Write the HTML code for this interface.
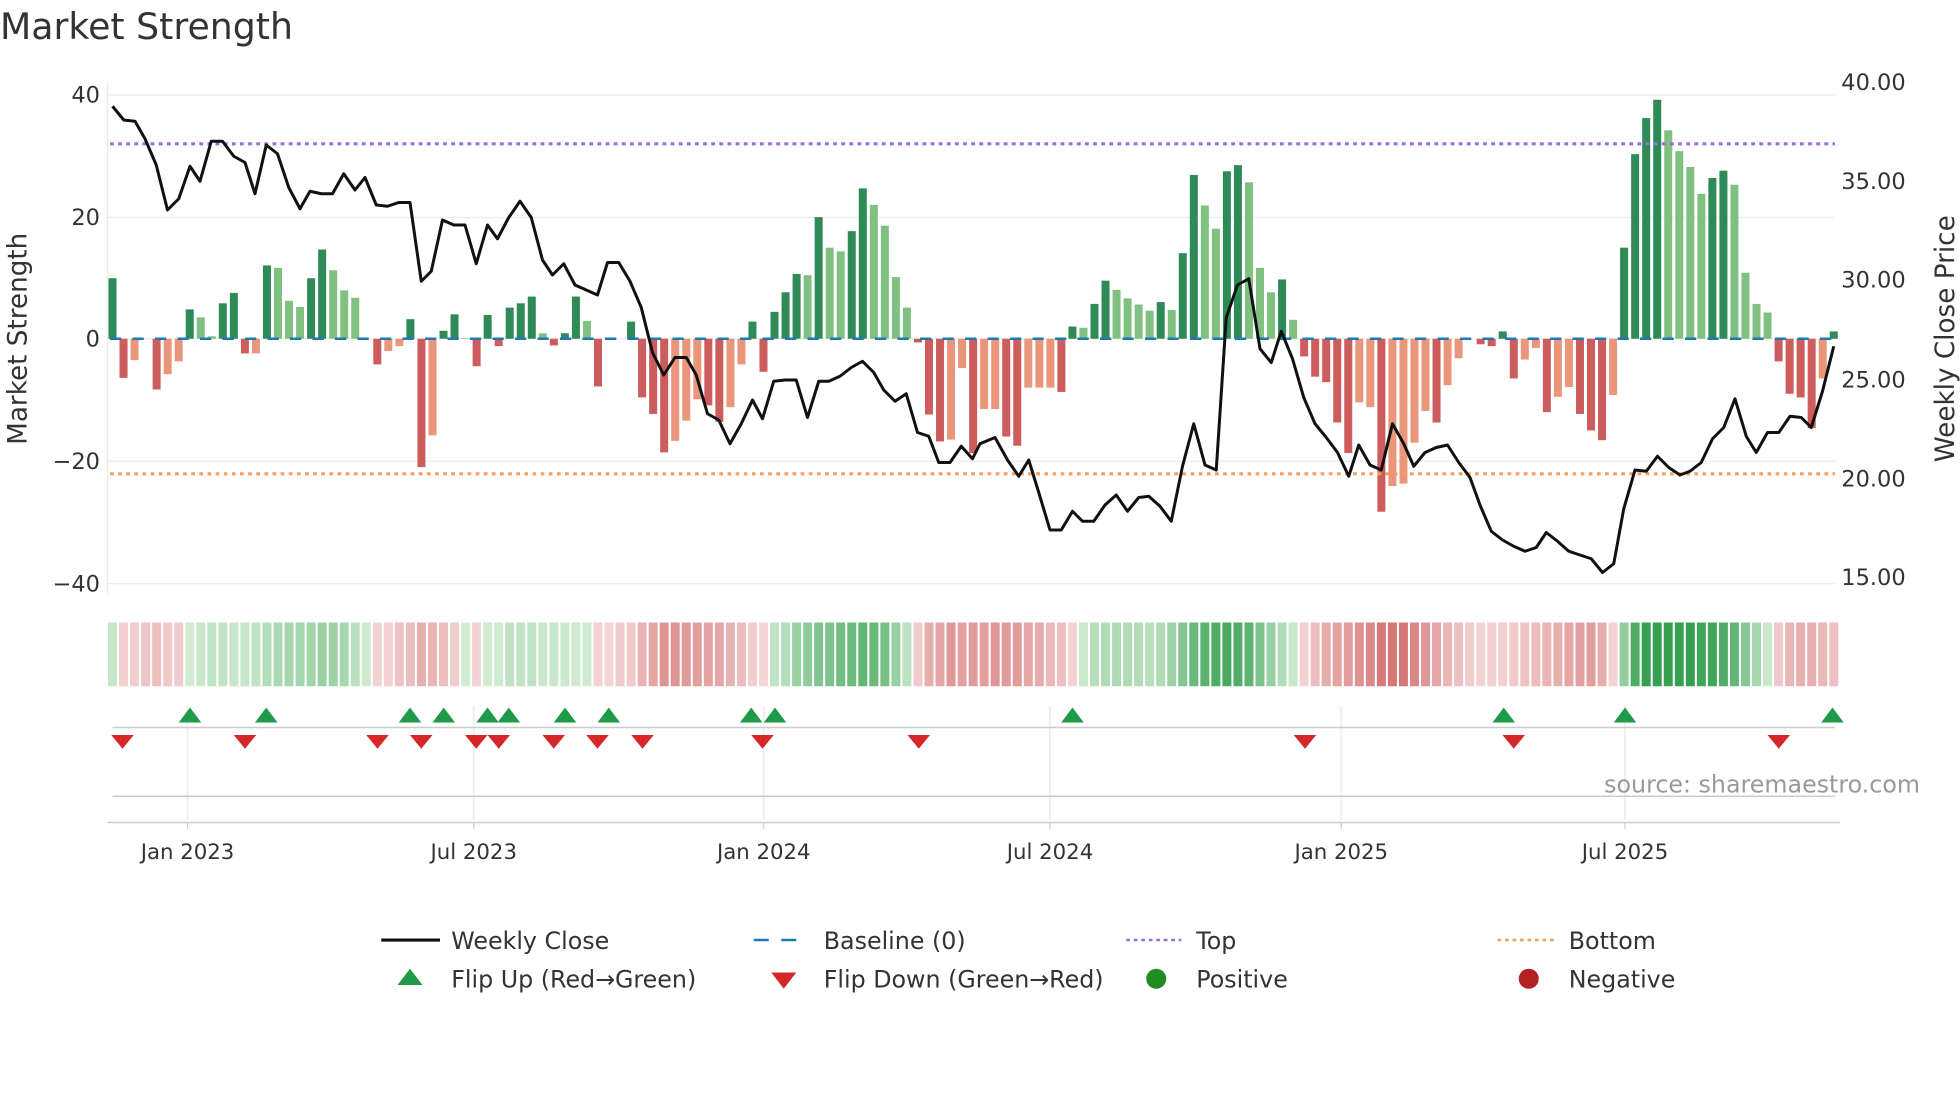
<!DOCTYPE html>
<html><head><meta charset="utf-8"><style>
html,body{margin:0;padding:0;background:#fff;}
svg{display:block;font-family:"DejaVu Sans","Liberation Sans",sans-serif;}
</style></head><body>
<svg id="s" width="1960" height="1102" viewBox="0 0 1568 881.6" xmlns="http://www.w3.org/2000/svg">
<rect width="1568" height="882" fill="#fff"/>
<text x="0" y="31" font-size="29" fill="#333">Market Strength</text>
<g stroke="#ececec" stroke-width="1">
<line x1="86" y1="76" x2="1468" y2="76"/><line x1="86" y1="174" x2="1468" y2="174"/>
<line x1="86" y1="271" x2="1468" y2="271"/><line x1="86" y1="369" x2="1468" y2="369"/>
<line x1="86" y1="467" x2="1468" y2="467"/>
<line x1="86" y1="65" x2="86" y2="476"/>
</g>
<g font-size="18" fill="#333" text-anchor="end">
<text x="80" y="82">40</text><text x="80" y="180">20</text><text x="80" y="277">0</text>
<text x="80" y="375">−20</text><text x="80" y="473">−40</text>
</g>
<g font-size="18" fill="#333">
<text x="1473" y="72">40.00</text><text x="1473" y="151">35.00</text><text x="1473" y="230">30.00</text>
<text x="1473" y="310">25.00</text><text x="1473" y="389">20.00</text><text x="1473" y="468">15.00</text>
</g>
<text transform="translate(21,271) rotate(-90)" text-anchor="middle" font-size="21" fill="#333">Market Strength</text>
<text transform="translate(1563,271) rotate(-90)" text-anchor="middle" font-size="21" fill="#333">Weekly Close Price</text>
<g id="bars"></g>
<line x1="88" y1="271" x2="1468" y2="271" stroke="#1f77b4" stroke-width="2" stroke-dasharray="9 9"/>
<line x1="88" y1="115" x2="1468" y2="115" stroke="#9b6be0" stroke-width="2.5" stroke-dasharray="3 3.5"/>
<line x1="88" y1="379" x2="1468" y2="379" stroke="#f2a05a" stroke-width="2.5" stroke-dasharray="3 3.5"/>
<polyline id="price" fill="none" stroke="#111" stroke-width="2.4" stroke-linejoin="round"/>
<g id="strip"></g>
<g stroke="#eee" stroke-width="1.5">
<line x1="150" y1="565" x2="150" y2="656"/><line x1="379" y1="565" x2="379" y2="656"/>
<line x1="611" y1="565" x2="611" y2="656"/><line x1="840" y1="565" x2="840" y2="656"/>
<line x1="1073" y1="565" x2="1073" y2="656"/><line x1="1300" y1="565" x2="1300" y2="656"/>
</g>
<line x1="90" y1="582" x2="1468" y2="582" stroke="#ccc" stroke-width="1.2"/>
<line x1="90" y1="637" x2="1468" y2="637" stroke="#ccc" stroke-width="1.2"/>
<line x1="86" y1="658" x2="1472" y2="658" stroke="#ccc" stroke-width="1.2"/>
<g stroke="#ccc"><line x1="150" y1="658" x2="150" y2="663"/><line x1="379" y1="658" x2="379" y2="663"/><line x1="611" y1="658" x2="611" y2="663"/><line x1="840" y1="658" x2="840" y2="663"/><line x1="1073" y1="658" x2="1073" y2="663"/><line x1="1300" y1="658" x2="1300" y2="663"/></g>
<g id="marks"></g>
<text x="1536" y="634" text-anchor="end" font-size="19" fill="#999">source: sharemaestro.com</text>
<g font-size="17" fill="#333" text-anchor="middle">
<text x="150" y="687">Jan 2023</text><text x="379" y="687">Jul 2023</text><text x="611" y="687">Jan 2024</text>
<text x="840" y="687">Jul 2024</text><text x="1073" y="687">Jan 2025</text><text x="1300" y="687">Jul 2025</text>
</g>
<g font-size="19" fill="#333">
<line x1="305" y1="752" x2="352" y2="752" stroke="#111" stroke-width="2.5"/>
<text x="361" y="759">Weekly Close</text>
<line x1="603" y1="752" x2="647" y2="752" stroke="#1f77b4" stroke-width="2" stroke-dasharray="12 10"/>
<text x="659" y="759">Baseline (0)</text>
<line x1="901" y1="752" x2="945" y2="752" stroke="#9b6be0" stroke-width="2" stroke-dasharray="3 3"/>
<text x="957" y="759">Top</text>
<line x1="1198" y1="752" x2="1243" y2="752" stroke="#f2a05a" stroke-width="2" stroke-dasharray="3 3"/>
<text x="1255" y="759">Bottom</text>
<polygon points="318,788 338,788 328,775" fill="#1f9a48"/>
<text x="361" y="790">Flip Up (Red→Green)</text>
<polygon points="617,778 637,778 627,791" fill="#d62728"/>
<text x="659" y="790">Flip Down (Green→Red)</text>
<circle cx="925" cy="783" r="8" fill="#228b22"/>
<text x="957" y="790">Positive</text>
<circle cx="1223" cy="783" r="8" fill="#b22222"/>
<text x="1255" y="790">Negative</text>
</g>
</svg>
<script>
var NS="http://www.w3.org/2000/svg";
var V=[[9.9,'D'],[-6.4,'R'],[-3.5,'S'],[0,'L'],[-8.3,'R'],[-5.8,'S'],[-3.7,'S'],[4.8,'D'],[3.5,'L'],[0.4,'L'],
[5.8,'D'],[7.5,'D'],[-2.4,'R'],[-2.4,'S'],[12,'D'],[11.6,'L'],[6.2,'L'],[5.2,'L'],[9.9,'D'],[14.6,'D'],
[11.2,'L'],[7.9,'L'],[6.7,'L'],[0,'L'],[-4.2,'R'],[-2,'S'],[-1.2,'S'],[3.2,'D'],[-21,'R'],[-15.8,'S'],
[1.3,'D'],[4,'D'],[0.1,'L'],[-4.5,'R'],[3.9,'D'],[-1.2,'R'],[5.1,'D'],[5.8,'D'],[6.9,'D'],[0.9,'L'],
[-1.1,'R'],[0.9,'D'],[6.9,'D'],[2.9,'L'],[-7.8,'R'],[0.1,'L'],[0,'L'],[2.8,'D'],[-9.6,'R'],[-12.3,'R'],
[-18.6,'R'],[-16.7,'S'],[-13.4,'S'],[-9.9,'S'],[-10.9,'R'],[-13.6,'R'],[-11.2,'S'],[-4.2,'S'],[2.8,'D'],[-5.4,'R'],
[4.4,'D'],[7.6,'D'],[10.6,'D'],[10.4,'L'],[19.9,'D'],[14.9,'L'],[14.3,'L'],[17.6,'D'],[24.6,'D'],[21.9,'L'],
[18.5,'L'],[10.1,'L'],[5.1,'L'],[-0.6,'R'],[-12.4,'R'],[-16.8,'R'],[-16.5,'S'],[-4.8,'S'],[-18.7,'R'],
[-11.5,'S'],[-11.5,'S'],[-16,'R'],[-17.5,'R'],[-8,'S'],[-8,'S'],[-8,'S'],[-8.7,'R'],[2,'D'],[1.8,'L'],[5.7,'D'],
[9.5,'D'],[8,'L'],[6.6,'L'],[5.6,'L'],[4.6,'L'],[6,'D'],[4.7,'L'],[14,'D'],[26.8,'D'],[21.8,'L'],[18,'L'],
[27.4,'D'],[28.4,'D'],[25.6,'L'],[11.6,'L'],[7.6,'L'],[9.7,'D'],[3.1,'L'],[-2.9,'R'],[-6.2,'R'],[-7.1,'R'],
[-13.7,'R'],[-18.7,'R'],[-10.4,'S'],[-11.2,'S'],[-28.3,'R'],[-24.1,'S'],[-23.7,'S'],[-17,'S'],[-11.8,'S'],[-13.7,'R'],
[-7.6,'S'],[-3.2,'S'],[0,'L'],[-0.9,'R'],[-1.2,'R'],[1.2,'D'],[-6.5,'R'],[-3.4,'S'],[-1.5,'S'],[-12,'R'],
[-9.5,'S'],[-7.9,'S'],[-12.3,'R'],[-15,'R'],[-16.6,'R'],[-9.2,'S'],[14.9,'D'],[30.2,'D'],[36.1,'D'],[39.1,'D'],
[34.1,'L'],[30.7,'L'],[28.1,'L'],[23.7,'L'],[26.3,'D'],[27.5,'D'],[25.2,'L'],[10.8,'L'],[5.7,'L'],[4.3,'L'],
[-3.7,'R'],[-9,'R'],[-9.6,'R'],[-14.6,'R'],[-6.5,'S'],[1.2,'D']];
var C={D:'#2e8b57',L:'#80c080',R:'#cd5c5c',S:'#e9967a'};
var bars=document.getElementById('bars'),strip=document.getElementById('strip');
var step=(1467-90)/(V.length-1);
function rect(g,x,y,w,h,f){var r=document.createElementNS(NS,'rect');r.setAttribute('x',x);r.setAttribute('y',y);r.setAttribute('width',w);r.setAttribute('height',h);r.setAttribute('fill',f);g.appendChild(r);}
function mix(a,b,t){return 'rgb('+[0,1,2].map(function(i){return Math.round(a[i]+(b[i]-a[i])*t)}).join(',')+')';}
for(var i=0;i<V.length;i++){
 var v=V[i][0],x=90+i*step,h=Math.abs(v)*4.89;
 if(h>0.2) rect(bars,x-3.2,v>0?271-h:271,6.4,h,C[V[i][1]]);
 var s=0,n=0;for(var k=-2;k<=2;k++){if(V[i+k]){s+=V[i+k][0]*(k==0?2:1);n+=(k==0?2:1);}}
 var m=s/n,t=Math.min(1,Math.abs(m)/28),col;
 if(m>=0) col=mix([214,238,214],[54,160,80],t); else col=mix([244,214,214],[205,90,90],t);
 rect(strip,x-3.6,498,7.2,51,col);
}
var P=[[90,85],[99,96],[108,97],[116,111],[125,132],[134,168],[143,159],[152,133],[160,145],[169,113],[178,113],[187,125],[196,130],[204,155],[213,116],[222,123],[231,150],[240,167],[248,153],[257,155],[266,155],[275,139],[284,152],[292,142],[301,164],[310,165],[319,162],[328,162],[337,225],[345,217],[354,176],[363,180],[372,180],[381,211],[390,180],[398,191],[407,174],[416,161],[425,174],[434,208],[442,220],[451,211],[460,228],[469,232],[478,236],[486,210],[495,210],[504,225],[513,246],[522,282],[531,300],[540,286],[549,286],[557,300],[566,331],[575,336],[584,355],[593,339],[602,320],[610,335],[619,305],[628,304],[637,304],[646,334],[655,305],[663,305],[672,301],[681,294],[690,289],[699,298],[707,312],[716,321],[725,315],[734,346],[743,349],[751,370],[760,370],[769,357],[778,367],[784,355],[796,350],[806,368],[815,381],[823,368],[831,394],[840,424],[849,424],[858,409],[866,417],[875,417],[884,404],[893,396],[902,409],[911,398],[919,397],[928,405],[937,417],[946,373],[955,339],[964,372],[973,376],[981,254],[990,228],[999,223],[1008,279],[1017,290],[1025,265],[1034,287],[1043,318],[1052,339],[1061,350],[1070,362],[1079,381],[1087,356],[1096,372],[1105,376],[1114,339],[1123,355],[1131,373],[1140,362],[1149,358],[1158,356],[1167,370],[1176,382],[1184,404],[1193,425],[1202,432],[1211,437],[1220,441],[1229,438],[1237,426],[1246,433],[1255,441],[1264,444],[1273,447],[1282,458],[1291,451],[1299,407],[1308,376],[1317,377],[1326,365],[1335,374],[1344,380],[1352,377],[1361,370],[1370,351],[1379,342],[1388,319],[1397,349],[1405,362],[1414,346],[1423,346],[1432,333],[1441,334],[1449,342],[1458,313],[1467,277]];
document.getElementById('price').setAttribute('points',P.map(function(p){return p.join(',')}).join(' '));
var marks=document.getElementById('marks');
[152,213,328,355,390,407,452,487,601,620,858,1203,1300,1466].forEach(function(x){var p=document.createElementNS(NS,'polygon');p.setAttribute('points',(x-9)+',578 '+(x+9)+',578 '+x+',566');p.setAttribute('fill','#1f9a48');marks.appendChild(p);});
[98,196,302,337,381,399,443,478,514,610,735,1044,1211,1423].forEach(function(x){var p=document.createElementNS(NS,'polygon');p.setAttribute('points',(x-9)+',588 '+(x+9)+',588 '+x+',599');p.setAttribute('fill','#d62728');marks.appendChild(p);});
</script>
</body></html>
